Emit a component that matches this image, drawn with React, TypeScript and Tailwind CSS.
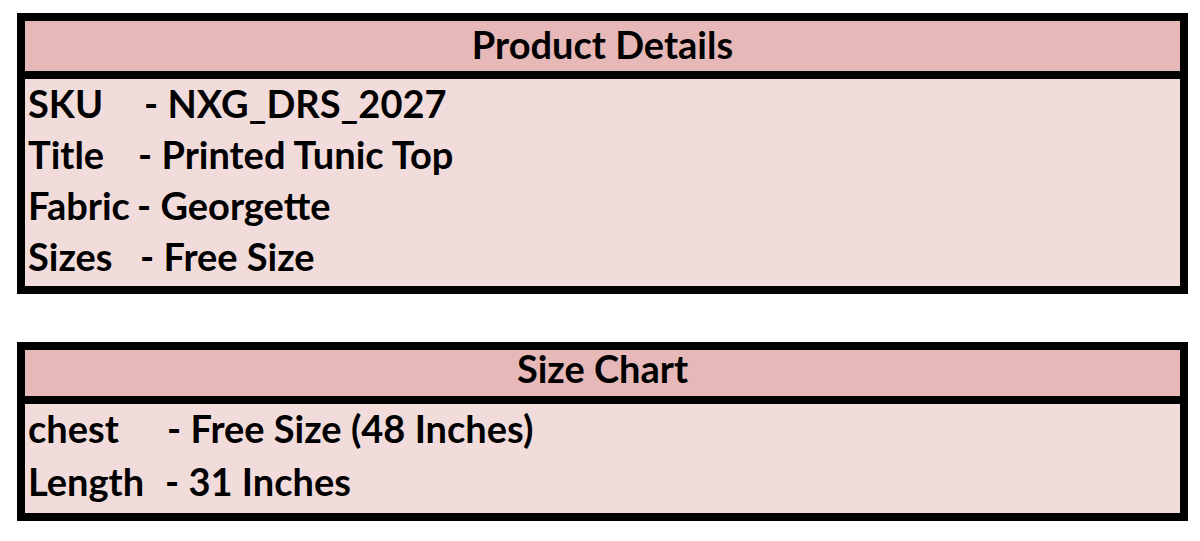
const productRows = [
  { label: "SKU", value: "- NXG_DRS_2027", w: "w-[116px]" },
  { label: "Title", value: "- Printed Tunic Top", w: "w-[110px]" },
  { label: "Fabric", value: "- Georgette", w: "w-[109px]" },
  { label: "Sizes", value: "- Free Size", w: "w-[112px]" },
];

const sizeRows = [
  { label: "chest", value: "- Free Size (48 Inches)", w: "w-[139px]" },
  { label: "Length", value: "- 31 Inches", w: "w-[137px]" },
];

function Row({ label, value, w, h }: { label: string; value: string; w: string; h: string }) {
  return (
    <div className={`${h} pl-[3px] whitespace-nowrap`}>
      <span className={`inline-block ${w}`}>{label}</span>
      <span>{value}</span>
    </div>
  );
}

export default function App() {
  return (
    <div
      className="w-[1200px] h-[541px] bg-white pt-[13px] pl-[17px] text-black font-bold text-[38px]"
      style={{ fontFamily: "Lato, 'Open Sans', sans-serif" }}
    >
      {/* Product Details */}
      <div className="w-[1171px] border-[8px] border-black">
        <div className="h-[50px] leading-[46px] bg-[#e6b8b7] border-b-[8px] border-black text-center box-content">
          Product Details
        </div>
        <div className="h-[207px] bg-[#f2dcdb]">
          {productRows.map((r) => (
            <Row key={r.label} {...r} h="h-[51px] leading-[49px]" />
          ))}
        </div>
      </div>

      {/* Size Chart */}
      <div className="w-[1171px] border-[8px] border-black mt-[48px]">
        <div className="h-[46px] leading-[36px] bg-[#e6b8b7] border-b-[8px] border-black text-center box-content">
          Size Chart
        </div>
        <div className="h-[109px] bg-[#f2dcdb]">
          {sizeRows.map((r) => (
            <Row key={r.label} {...r} h="h-[53px] leading-[49px]" />
          ))}
        </div>
      </div>
    </div>
  );
}
